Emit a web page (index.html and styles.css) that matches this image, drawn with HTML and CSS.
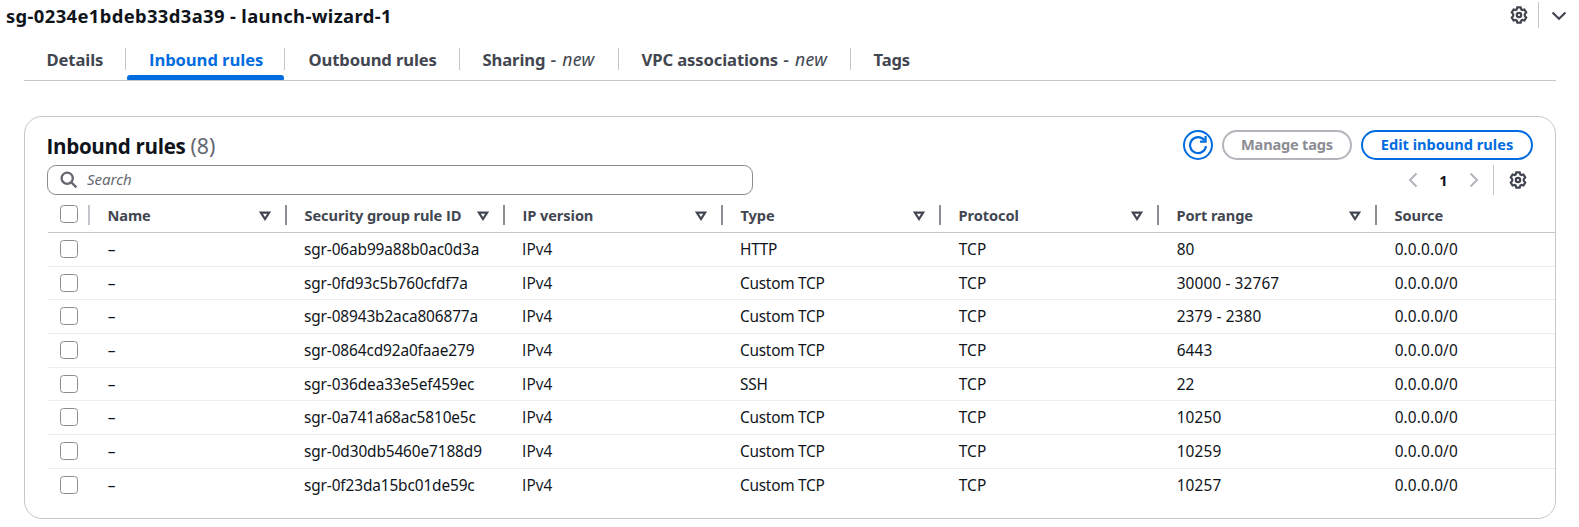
FILE: index.html
```html
<!DOCTYPE html>
<html lang="en">
<head>
<meta charset="utf-8">
<title>Security group</title>
<link rel="stylesheet" href="styles.css">
</head>
<body>
<svg width="0" height="0" class="defs">
  <symbol id="gear" viewBox="0 0 18 18"><path d="M7.300 1.400h3.400l.6 2 1.100.6 2-.5 1.800 3-1.400 1.600v1.800l1.400 1.600-1.800 3-2-.5-1.100.6-.6 2H7.300l-.6-2-1.100-.6-2 .5-1.800-3 1.400-1.600V8.100L1.800 6.500l1.800-3 2 .5 1.100-.6z"/><circle cx="9" cy="9" r="2.200"/></symbol>
  <symbol id="filter" viewBox="0 0 12 10"><path d="M1.800 1.600h8.400L6 8z"/></symbol>
</svg>
<header class="top">
  <h1>sg-0234e1bdeb33d3a39 - launch-wizard-1</h1>
  <div class="top-tools">
    <svg class="gear"><use href="#gear"/></svg>
    <i class="rule"></i>
    <svg class="down" viewBox="0 0 16 10"><path d="M1.500 1.500 8 7.800l6.500-6.300"/></svg>
  </div>
</header>
<nav class="tabs">
  <a class="t1">Details</a>
  <a class="t2 active">Inbound rules</a>
  <a class="t3">Outbound rules</a>
  <a class="t4">Sharing <em><b>-</b> new</em></a>
  <a class="t5">VPC associations <em><b>-</b> new</em></a>
  <a class="t6">Tags</a>
</nav>
<main class="panel">
  <div class="head">
    <h2>Inbound rules <span>(8)</span></h2>
    <div class="actions">
      <button class="refresh"><svg viewBox="0 0 20 20"><path d="M18 11.200A8 8 0 1 1 16.400 5.200"/><path d="M17.600 1v5.700H12"/></svg></button>
      <button class="manage">Manage tags</button>
      <button class="edit">Edit inbound rules</button>
    </div>
  </div>
  <div class="tools">
    <div class="search"><svg viewBox="0 0 18 18"><circle cx="7.200" cy="7.200" r="5.600"/><path d="m11.400 11.400 5 5"/></svg><span>Search</span></div>
    <div class="pager">
      <svg class="chev" viewBox="0 0 10 16"><path d="M8.500 1.500 2 8l6.500 6.500"/></svg>
      <b>1</b>
      <svg class="chev" viewBox="0 0 10 16"><path d="M1.500 1.500 8 8l-6.500 6.500"/></svg>
      <i class="rule"></i>
      <svg class="gear"><use href="#gear"/></svg>
    </div>
  </div>
  <div class="table">
    <div class="row th"><div><i class="box"></i></div><div>Name<svg><use href="#filter"/></svg></div><div><p>Security group rule <span class="plain">ID</span></p><svg><use href="#filter"/></svg></div><div><p class="plain">IP version</p><svg><use href="#filter"/></svg></div><div>Type<svg><use href="#filter"/></svg></div><div>Protocol<svg><use href="#filter"/></svg></div><div>Port range<svg><use href="#filter"/></svg></div><div>Source</div></div>
    <div class="row"><div><i class="box"></i></div><div>–</div><div class="id">sgr-06ab99a88b0ac0d3a</div><div class="plain">IPv4</div><div class="type">HTTP</div><div>TCP</div><div>80</div><div>0.0.0.0/0</div></div>
    <div class="row"><div><i class="box"></i></div><div>–</div><div class="id">sgr-0fd93c5b760cfdf7a</div><div class="plain">IPv4</div><div class="type">Custom TCP</div><div>TCP</div><div>30000 - 32767</div><div>0.0.0.0/0</div></div>
    <div class="row"><div><i class="box"></i></div><div>–</div><div class="id">sgr-08943b2aca806877a</div><div class="plain">IPv4</div><div class="type">Custom TCP</div><div>TCP</div><div>2379 - 2380</div><div>0.0.0.0/0</div></div>
    <div class="row"><div><i class="box"></i></div><div>–</div><div class="id">sgr-0864cd92a0faae279</div><div class="plain">IPv4</div><div class="type">Custom TCP</div><div>TCP</div><div>6443</div><div>0.0.0.0/0</div></div>
    <div class="row"><div><i class="box"></i></div><div>–</div><div class="id">sgr-036dea33e5ef459ec</div><div class="plain">IPv4</div><div class="type">SSH</div><div>TCP</div><div>22</div><div>0.0.0.0/0</div></div>
    <div class="row"><div><i class="box"></i></div><div>–</div><div class="id">sgr-0a741a68ac5810e5c</div><div class="plain">IPv4</div><div class="type">Custom TCP</div><div>TCP</div><div>10250</div><div>0.0.0.0/0</div></div>
    <div class="row"><div><i class="box"></i></div><div>–</div><div class="id">sgr-0d30db5460e7188d9</div><div class="plain">IPv4</div><div class="type">Custom TCP</div><div>TCP</div><div>10259</div><div>0.0.0.0/0</div></div>
    <div class="row"><div><i class="box"></i></div><div>–</div><div class="id">sgr-0f23da15bc01de59c</div><div class="plain">IPv4</div><div class="type">Custom TCP</div><div>TCP</div><div>10257</div><div>0.0.0.0/0</div></div>
  </div>
</main>
</body>
</html>
```
FILE: styles.css
```css
* { box-sizing: border-box; margin: 0; padding: 0; }
body { background: #fff; color: #0f141a; font: 15.4px/20px "Noto Sans", sans-serif; white-space: nowrap; overflow: hidden; }
svg { fill: none; stroke: #424650; stroke-width: 2.2; flex: none; display: block; }
.defs { display: none; }
.plain { font-family: "Open Sans", sans-serif; }
.gear { width: 18px; height: 18px; }
.rule { width: 1px; background: #c6c6cd; }

.top { display: flex; justify-content: space-between; height: 48px; padding: 2px 12px 0 6px; }
h1 { font-size: 18.4px; line-height: 28px; letter-spacing: .37px; }
.top-tools { display: flex; align-items: center; height: 26px; }
.top-tools .rule { height: 26px; margin: 0 12px 0 10px; }
.down { width: 16px; height: 10px; margin-top: 2px; }

.tabs { display: flex; height: 33px; margin: 0 23px 0 24px; border-bottom: 1px solid #c6c6cd; }
.tabs a { position: relative; height: 22px; padding-left: 22px; border-right: 1px solid #c6c6cd; color: #424650; font-size: 16.6px; line-height: 23px; font-weight: 700; letter-spacing: -.1px; }
.tabs .t1 { width: 102px; padding-left: 22.5px; }
.tabs .t2 { width: 159px; font-family: "Open Sans", sans-serif; color: #006ce0; padding-left: 23px; }
.tabs .t3 { width: 175px; padding-left: 23.5px; }
.tabs .t4 { width: 159px; padding-left: 22.5px; }
.tabs .t5 { width: 232px; padding-left: 22.5px; }
.tabs .t6 { width: 90px; padding-left: 22.5px; border: 0; }
.tabs em { font-weight: 400; font-size: 17.6px; line-height: 20px; letter-spacing: .3px; margin-left: 1px; }
.tabs em b { font-style: normal; font-weight: 500; margin-right: 1px; }
.active::after { content: ""; position: absolute; left: 1px; right: 0; top: 27px; height: 5px; border-radius: 3px 3px 1px 1px; background: #006ce0; }

.panel { margin: 35px 23px 0 24px; height: 403px; border: 1px solid #c6c6cd; border-radius: 18px; padding: 13px 0 0 22px; overflow: hidden; }
.head { display: flex; justify-content: space-between; height: 35px; padding-right: 22px; }
h2 { font: 700 20.6px/32px "Open Sans", sans-serif; letter-spacing: -.33px; margin-left: -.5px; }
h2 span { font: 400 21.3px/32px "Noto Sans", sans-serif; color: #656871; letter-spacing: 0; }
.actions { display: flex; }
button { height: 30px; border: 2px solid #006ce0; border-radius: 15px; background: #fff; color: #006ce0; font: 700 14.6px/24px "Noto Sans", sans-serif; padding-bottom: 2px; }
.refresh { width: 30px; padding: 3px; }
.refresh svg { width: 20px; height: 20px; stroke: #006ce0; }
.manage { width: 130px; margin: 0 9px; color: #8c8c94; border-color: #b4b4bb; letter-spacing: -.2px; }
.edit { width: 172px; }

.tools { display: flex; justify-content: space-between; height: 30px; padding-right: 28px; }
.search { display: flex; align-items: center; width: 706px; height: 30px; border: 1px solid #8c8c94; border-radius: 9px; padding-left: 12px; color: #656871; font-style: italic; font-size: 15px; }
.search svg { width: 18px; height: 18px; stroke: #656871; stroke-width: 2.3; margin-right: 9px; }
.search span { padding-bottom: 2px; }
.pager { display: flex; align-items: center; }
.pager b { width: 51px; text-align: center; font-size: 14.6px; }
.pager .rule { height: 30px; margin: 0 15px 0 14px; }
.chev { width: 10px; height: 16px; stroke: #b4b4bb; stroke-width: 2; }

.table { padding-left: 1px; }
.row { display: grid; grid-template-columns: 42px 197px repeat(5, 218px) 1fr; height: 33.7px; align-items: center; border-bottom: 1px solid #ebebf0; }
.row:last-child { height: 32.4px; border: 0; }
.row > div { padding: 1px 0 0 17.7px; letter-spacing: .12px; }
.row > div:first-child { padding: 0 0 1px 12px; }
.row > .id { padding-left: 17px; letter-spacing: -.12px; }
.row > .plain { padding-left: 17px; }
.row > .type { padding-left: 17px; letter-spacing: -.25px; }
.row.th { height: 38px; color: #424650; font-weight: 700; font-size: 14.6px; border-color: #c6c6cd; padding-top: 3px; }
.row.th > div { display: flex; align-items: center; justify-content: space-between; height: 20px; padding: 0 14px 0 17.5px; border-right: 2px solid #8c8c94; letter-spacing: -.08px; }
.row.th > div:first-child { padding: 0 0 2px 12px; border-color: #c6c6cd; }
.row.th > div:last-child { border: 0; }
.th svg { width: 12px; height: 10px; margin-top: 1px; }
.box { display: block; flex: none; width: 18px; height: 18px; border: 1px solid #8c8c94; border-radius: 3.5px; }
```
